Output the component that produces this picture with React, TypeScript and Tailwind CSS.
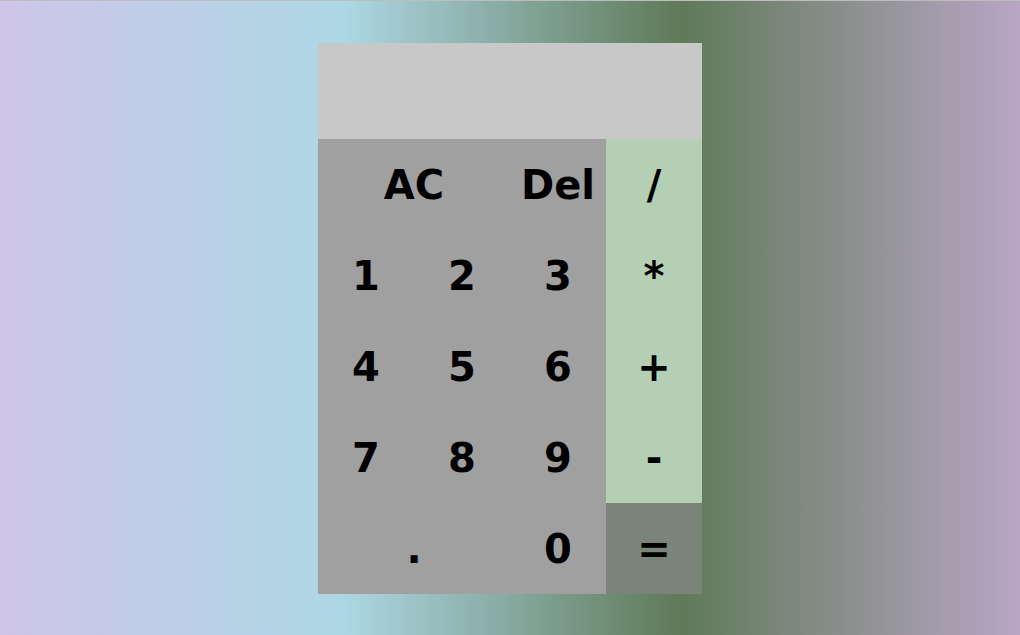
import React from "react";

const font = { fontFamily: '"DejaVu Sans", Verdana, sans-serif' };

export default function App() {
  const num = "flex items-center justify-center bg-[#a0a0a0] text-black text-[40px] font-bold";
  const op = "flex items-center justify-center bg-[#b4cfb3] text-black text-[40px] font-bold";
  return (
    <div
      className="w-[1020px] h-[635px] border-t border-[#bdbdbd] bg-[linear-gradient(to_right,#cec5e7_0%,#add8e6_33.3%,#5f7a58_66.7%,#b9a6c5_100%)] flex justify-center pt-[42px]"
      style={font}
    >
      <div className="w-[384px] flex flex-col">
        <div className="h-[96px] bg-[#c8c8c8]" />
        <div className="grid grid-cols-[96px_96px_96px_96px] grid-rows-[91px_91px_91px_91px_91px]">
          <div className={`${num} col-span-2`}>AC</div>
          <div className={num}>Del</div>
          <div className={op}>/</div>
          <div className={num}>1</div>
          <div className={num}>2</div>
          <div className={num}>3</div>
          <div className={op}>*</div>
          <div className={num}>4</div>
          <div className={num}>5</div>
          <div className={num}>6</div>
          <div className={op}>+</div>
          <div className={num}>7</div>
          <div className={num}>8</div>
          <div className={num}>9</div>
          <div className={op}>-</div>
          <div className={`${num} col-span-2`}>.</div>
          <div className={num}>0</div>
          <div className="flex items-center justify-center bg-[#7a8479] text-black text-[40px] font-bold">=</div>
        </div>
      </div>
    </div>
  );
}
